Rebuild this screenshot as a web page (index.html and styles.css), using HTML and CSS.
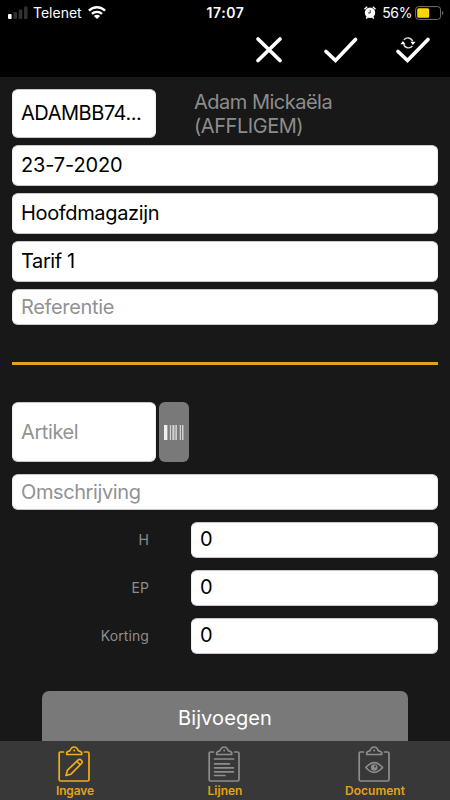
FILE: index.html
```html
<!DOCTYPE html>
<html lang="nl">
<head>
<meta charset="utf-8">
<title>Ingave</title>
<link rel="stylesheet" href="styles.css">
</head>
<body>
<div class="app">
  <header class="top">
    <div class="status">
      <div class="status-left">
        <svg class="signal" width="20" height="13" viewBox="0 0 20 13"><rect x="0" y="8" width="3.6" height="5" rx="1" fill="#fff"/><g fill="#303030"><rect x="5.4" y="6" width="3.6" height="7" rx="1"/><rect x="10.7" y="3.4" width="3.6" height="9.6" rx="1"/><rect x="16" y="0.4" width="3.6" height="12.6" rx="1"/></g></svg>
        <span class="carrier">Telenet</span>
        <svg class="wifi" width="18" height="13" viewBox="0 0 18 13"><g fill="none" stroke="#fff" stroke-width="2.4"><path d="M.9 4.7C5.5.1 12.500.1 17.100 4.700"/><path d="M4 7.900C6.800 5.200 11.200 5.200 14 7.900"/></g><path d="M5.900 10C7.700 8.400 10.300 8.400 12.100 10L9 13z" fill="#fff"/></svg>
      </div>
      <span class="clock">17:07</span>
      <div class="status-right">
        <svg width="12" height="13" viewBox="0 0 12 13"><circle cx="6" cy="6.800" r="5.200" fill="#fff"/><path d="M.5 3.200L3.200.8M11.500 3.200L8.800.8M2.200 12.500L3.500 11M9.800 12.500L8.500 11" stroke="#fff" stroke-width="1.500"/><path d="M6.200 4V7H4" stroke="#000" stroke-width=".8" fill="none"/></svg>
        <span class="percent">56%</span>
        <svg class="battery" width="29" height="14" viewBox="0 0 29 14"><rect x=".6" y=".6" width="25" height="12.800" rx="3" fill="none" stroke="#77736a"/><rect x="2.200" y="2.200" width="12" height="9.600" rx="1.500" fill="#ffd60a"/><path d="M27.200 4.800c1.600.8 1.600 3.600 0 4.400z" fill="#77736a"/></svg>
      </div>
    </div>
    <nav class="actions">
      <svg width="28" height="28" viewBox="0 0 28 28"><path d="M3 3L25 24.500M25 3L3 24.500" class="mark"/></svg>
      <svg width="36" height="28" viewBox="0 0 36 28"><path d="M3 15.500L12.500 24.500L32.500 3.500" class="mark"/></svg>
      <svg width="36" height="28" viewBox="0 0 36 28"><path d="M3 15.500L12.500 24.500L33 3.500" class="mark"/><g transform="translate(-.8 -.3)"><path d="M9.700 4.200A5 5 0 0 1 18.400 5.500M18.200 10.300A5 5 0 0 1 9.500 8.500" class="sync"/><path d="M16.200 6h5.200l-2.700 3.300zM6.200 8.500h5.200L8.700 5.200z" fill="#fff"/></g></svg>
    </nav>
  </header>

  <main class="form">
    <div class="customer">
      <div class="field code"><span class="t-code">ADAMBB74...</span></div>
      <p class="name"><span class="t-name">Adam Mickaëla</span><br><span class="t-town">(AFFLIGEM)</span></p>
    </div>
    <div class="field tall"><span class="t-date">23-7-2020</span></div>
    <div class="field tall"><span class="t-store">Hoofdmagazijn</span></div>
    <div class="field tall"><span class="t-tarif">Tarif 1</span></div>
    <div class="field hint reference"><span class="t-ref">Referentie</span></div>
    <hr class="rule">
    <div class="article">
      <div class="field hint item"><span class="t-item">Artikel</span></div>
      <div class="scan"><svg width="20" height="15" viewBox="0 0 20 15"><g fill="#efefef"><path d="M0 0h3.400v15H0zM11.500 0h1.200v15h-1.200z"/></g><g fill="#d0d0d0"><path d="M5.800 0h1.300v15H5.800zM8.300 0h2.200v15H8.300zM15.700 0h1.300v15h-1.300zM18 0h1.500v15H18z"/></g></svg></div>
    </div>
    <div class="field hint description"><span class="t-desc">Omschrijving</span></div>
    <div class="amount"><label>H</label><div class="field">0</div></div>
    <div class="amount"><label>EP</label><div class="field">0</div></div>
    <div class="amount"><label>Korting</label><div class="field">0</div></div>
    <div class="add"><span class="t-add">Bijvoegen</span></div>
  </main>

  <footer class="tabs">
    <div class="tab active">
      <svg width="32" height="36" viewBox="0 0 32 36"><path class="line" d="M5.500 6H2.500Q1.200 6 1.200 7.500V33.500Q1.200 35 2.500 35H29.500Q31 35 31 33.500V7.500Q31 6 29.500 6H26.500"/><path class="line" d="M8.700 8.500H23.700V7Q23.700 5.400 20.500 4.800C19.500 2.500 18.500 1 16.200 1S12.800 2.500 11.900 4.800Q8.700 5.400 8.700 7z"/><circle cx="16.200" cy="4.500" r="1"/><path class="line" d="M8 29.500L9.500 24.200L20.500 13.700Q22 12.800 23.500 14.500Q24.800 16 23.500 17.500L13 28.200zM19 15.500L22 18.500"/></svg>
      <span class="t-tab1">Ingave</span>
    </div>
    <div class="tab">
      <svg width="32" height="36" viewBox="0 0 32 36"><path class="line" d="M5.500 6H2.500Q1.200 6 1.200 7.500V33.500Q1.200 35 2.500 35H29.500Q31 35 31 33.500V7.500Q31 6 29.500 6H26.500"/><path class="line" d="M8.700 8.500H23.700V7Q23.700 5.400 20.500 4.800C19.500 2.500 18.500 1 16.200 1S12.800 2.500 11.900 4.800Q8.700 5.400 8.700 7z"/><circle cx="16.200" cy="4.500" r="1"/><path class="line" d="M6.500 13H25.500M6.500 17.800H21.500M6.500 21.800H25.500M6.500 25.800H25.500M6.500 29.500H17"/></svg>
      <span class="t-tab2">Lijnen</span>
    </div>
    <div class="tab">
      <svg width="32" height="36" viewBox="0 0 32 36"><path class="line" d="M5.500 6H2.500Q1.200 6 1.200 7.500V33.500Q1.200 35 2.500 35H29.500Q31 35 31 33.500V7.500Q31 6 29.500 6H26.500"/><path class="line" d="M8.700 8.500H23.700V7Q23.700 5.400 20.500 4.800C19.500 2.500 18.500 1 16.200 1S12.800 2.500 11.900 4.800Q8.700 5.400 8.700 7z"/><circle cx="16.200" cy="4.500" r="1"/><path class="line" d="M7.800 21.500Q16.200 11.800 24.600 21.500Q16.200 31.200 7.800 21.500z"/><circle cx="16.200" cy="21.500" r="3.300"/><circle cx="17.200" cy="20.500" r="1" fill="#383838"/></svg>
      <span class="t-tab3">Document</span>
    </div>
  </footer>
</div>
</body>
</html>
```
FILE: styles.css
```css
* { box-sizing: border-box; }
body { margin: 0; background: #181818; font-family: Inter, "Liberation Sans", sans-serif; }
svg { display: block; flex: none; }
.app { width: 450px; height: 800px; display: flex; flex-direction: column; overflow: hidden; background: #181818; }
.top { flex: none; height: 77px; background: #000; color: #fff; }
.status { height: 25px; display: grid; grid-template-columns: 1fr auto 1fr; align-items: center; padding: 0 6px 0 8px; font-size: 14px; line-height: 24px; }
.status-left, .status-right { display: flex; align-items: center; }
.carrier { margin: 0 6px 0 5px; }
.clock { margin-right: 1px; font-weight: 600; letter-spacing: .6px; }
.status-right { justify-content: flex-end; }
.percent { margin: 0 3px 0 6px; letter-spacing: -.4px; }
.actions { display: flex; justify-content: flex-end; padding: 11px 19px 0 0; }
.actions svg + svg { margin-left: 40px; }
.actions svg:last-child { margin-left: 36px; }
.mark { fill: none; stroke: #fff; stroke-width: 3.7; stroke-linecap: round; stroke-linejoin: miter; }
.sync { fill: none; stroke: #ddd; stroke-width: 1.4; }

.form { flex: 1; min-height: 0; overflow: hidden; padding: 12px 12px 0; display: flex; flex-direction: column; }
.form > * { flex: none; }
.field { height: 36px; padding: 0 9px 2px 8px; display: flex; align-items: center; background: #fff; border: 1px solid #c8c8c8; border-left-color: #eee; border-right-color: #eee; border-radius: 6px; font-size: 20px; line-height: 24px; color: #000; white-space: nowrap; }
.tall { height: 41px; margin-bottom: 7px; padding-bottom: 3px; }
.hint { color: #929292; }
.customer { display: flex; height: 49px; margin-bottom: 7px; }
.code { width: 144px; height: 49px; padding-bottom: 1px; }
.name { margin: 1px 0 0 38px; font-size: 20px; line-height: 24px; color: #8d8d8d; }
.t-code, .t-town { letter-spacing: -.45px; }
.t-name { letter-spacing: -.5px; }
.t-date { letter-spacing: -.15px; }
.t-store { letter-spacing: -.35px; }
.t-tarif { letter-spacing: -.4px; }
.t-ref { letter-spacing: -.35px; }
.t-item, .t-desc { letter-spacing: -.4px; }
.customer + .tall { padding-bottom: 2px; }
.tall + .tall { padding-bottom: 2px; }
.reference { padding-bottom: 0; }
.rule { width: 100%; height: 3px; margin: 37px 0 37px; border: 0; background: #e6a11d; }
.article { display: flex; gap: 3px; height: 60px; margin-bottom: 12px; }
.item { width: 144px; height: 60px; padding-bottom: 1px; }
.scan { width: 30px; display: flex; align-items: center; justify-content: center; border-radius: 6px; background: #797979; }
.description { margin-bottom: 12px; padding-bottom: 1px; }
.amount { display: grid; grid-template-columns: 137px 247px; column-gap: 42px; align-items: center; margin-bottom: 12px; }
.amount label { justify-self: end; padding-bottom: 2px; font-size: 14px; letter-spacing: .1px; color: #8d8d8d; }
.add { height: 56px; margin: 25px 30px 0; padding-bottom: 2px; display: flex; align-items: center; justify-content: center; border-radius: 7px; background: #797979; color: #fff; font-size: 20px; }
.t-add { letter-spacing: .1px; }

.tabs { flex: none; height: 59px; display: grid; grid-template-columns: repeat(3, 150px); background: #383838; }
.tab { display: flex; flex-direction: column; align-items: center; padding-top: 5px; color: #8d8d8d; font-size: 12px; line-height: 14px; font-weight: 600; }
.tab svg { margin-right: 2px; fill: currentColor; }
.tab .line { fill: none; stroke: currentColor; stroke-width: 1.7; stroke-linecap: round; stroke-linejoin: round; }
.tab span { margin-top: 2px; color: #e6a11d; }
.t-tab1 { letter-spacing: -.1px; }
.active { color: #f5ad14; }
```
